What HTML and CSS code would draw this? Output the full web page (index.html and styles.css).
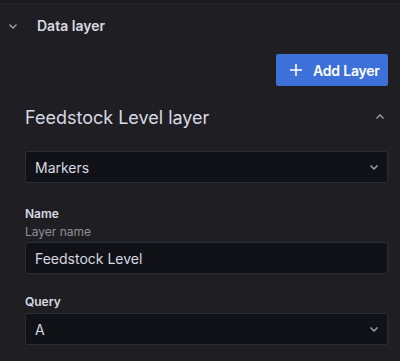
FILE: index.html
```html
<!DOCTYPE html>
<html lang="en">

<head>
  <meta charset="UTF-8" />
  <meta name="viewport" content="width=device-width, initial-scale=1.0" />
  <title>Data layer</title>
  <link rel="stylesheet" href="styles.css">
</head>

<body>

  <div class="topbar"></div>

  <div class="section-head">
    <svg class="chev" width="10" height="10" viewBox="0 0 10 10"><path d="M1.5 3.5 L5 7 L8.5 3.5" fill="none" stroke="#9fa0a8" stroke-width="1.3"/></svg>
    <span>Data layer</span>
  </div>

  <div class="actions">
    <button type="button" class="btn-primary">
      <svg width="14" height="14" viewBox="0 0 14 14"><path d="M7 1 V13 M1 7 H13" stroke="#fff" stroke-width="1.6"/></svg>
      <span>Add Layer</span>
    </button>
  </div>

  <div class="layer">
    <div class="layer-head">
      <h2>Feedstock Level layer</h2>
      <svg width="10" height="10" viewBox="0 0 10 10"><path d="M1.5 6.5 L5 3 L8.5 6.5" fill="none" stroke="#9fa0a8" stroke-width="1.3"/></svg>
    </div>

    <div class="select">
      <span>Markers</span>
      <svg width="10" height="10" viewBox="0 0 10 10"><path d="M1.5 3.5 L5 7 L8.5 3.5" fill="none" stroke="#9fa0a8" stroke-width="1.5"/></svg>
    </div>

    <div class="field">
      <label>Name</label>
      <div class="desc">Layer name</div>
      <div class="input">Feedstock Level</div>
    </div>

    <div class="field">
      <label>Query</label>
      <div class="select">
        <span>A</span>
        <svg width="10" height="10" viewBox="0 0 10 10"><path d="M1.5 3.5 L5 7 L8.5 3.5" fill="none" stroke="#9fa0a8" stroke-width="1.5"/></svg>
      </div>
    </div>
  </div>

</body>

</html>
```

FILE: styles.css
```css
* {
    box-sizing: border-box;
}
html, body {
    margin: 0;
    padding: 0;
}
body {
    background: #1f1f23;
    color: #ccccdc;
    font-family: Inter, "Noto Sans", sans-serif;
    font-size: 14px;
    height: 361px;
    overflow: hidden;
}
.topbar {
    height: 4px;
    background: #19191d;
    border-bottom: 1px solid #26272b;
}
.section-head {
    height: 41px;
    display: flex;
    align-items: center;
    padding: 2px 0 0 8px;
    gap: 19px;
    font-size: 14px;
    font-weight: 600;
    color: #d8d9e2;
}
.actions {
    display: flex;
    justify-content: flex-end;
    padding: 9px 12px 0 0;
}
.btn-primary {
    width: 112px;
    height: 32px;
    display: flex;
    align-items: center;
    gap: 10px;
    padding: 0 0 0 13px;
    background: #3d71d9;
    color: #fff;
    border: 0;
    border-radius: 2px;
    font-family: inherit;
    font-size: 14px;
    font-weight: 600;
    letter-spacing: -0.2px;
    white-space: nowrap;
}
.layer {
    padding: 0 12px 0 25px;
}
.layer-head {
    height: 65px;
    display: flex;
    align-items: center;
    justify-content: space-between;
    padding: 0 3px 3px 0;
}
.layer-head h2 {
    margin: 0;
    font-size: 18px;
    font-weight: 400;
    color: #d8d9e2;
}
.select, .input {
    height: 32px;
    display: flex;
    align-items: center;
    justify-content: space-between;
    padding: 0 8px 0 9px;
    background: #111217;
    border: 1px solid #2c2d33;
    border-radius: 2px;
    font-size: 14px;
    color: #d8d9e2;
}
.field {
    margin-top: 23px;
}
.field + .field {
    margin-top: 20px;
}
.field label {
    display: block;
    font-size: 12px;
    font-weight: 600;
    color: #d8d9e2;
    line-height: 16px;
}
.field .desc {
    font-size: 12px;
    color: #8e8e98;
    line-height: 16px;
    margin: 2px 0 2px;
}
.field label + .select {
    margin-top: 3px;
}
```
